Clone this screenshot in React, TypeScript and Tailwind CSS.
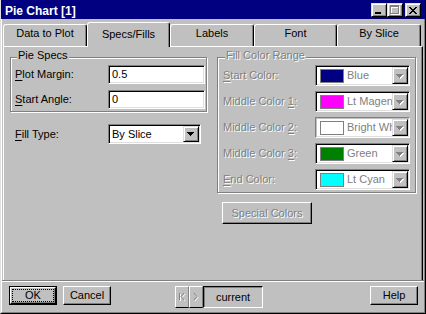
import React from "react";

const DIS = "text-[#808080] [text-shadow:1px_1px_0_#fff]";
const RAISED =
  "bg-[#c0c0c0] border border-t-white border-l-white border-r-black border-b-black shadow-[inset_-1px_-1px_0_#808080]";
const RAISED_SMALL =
  "bg-[#c0c0c0] border border-t-[#dfdfdf] border-l-[#dfdfdf] border-r-black border-b-black shadow-[inset_1px_1px_0_#fff,inset_-1px_-1px_0_#808080]";
const SUNKEN =
  "border border-t-[#808080] border-l-[#808080] border-r-white border-b-white shadow-[inset_1px_1px_0_#000,inset_-1px_-1px_0_#dfdfdf]";
const SUNKEN_SOFT =
  "border border-t-[#808080] border-l-[#808080] border-r-white border-b-white shadow-[inset_1px_1px_0_#c0c0c0,inset_-1px_-1px_0_#dfdfdf]";
const ETCHED = "border border-[#808080] shadow-[1px_1px_0_#fff,inset_1px_1px_0_#fff]";

function ArrowRows() {
  return (
    <>
      <rect x="0" y="0" width="7" height="1" />
      <rect x="1" y="1" width="5" height="1" />
      <rect x="2" y="2" width="3" height="1" />
      <rect x="3" y="3" width="1" height="1" />
    </>
  );
}

function DownArrow({ disabled }: { disabled?: boolean }) {
  return (
    <svg width="8" height="5" viewBox="0 0 8 5" shapeRendering="crispEdges">
      {disabled && (
        <g fill="#fff" transform="translate(1 1)">
          <ArrowRows />
        </g>
      )}
      <g fill={disabled ? "#808080" : "#000"}>
        <ArrowRows />
      </g>
    </svg>
  );
}

function DropBtn({ disabled }: { disabled?: boolean }) {
  return (
    <div className={`flex h-full w-[16px] shrink-0 items-center justify-center pt-[1px] ${RAISED_SMALL}`}>
      <DownArrow disabled={disabled} />
    </div>
  );
}

function ColorCombo({ swatch, label, soft }: { swatch: string; label: string; soft?: boolean }) {
  return (
    <div className={`flex h-[21px] w-[95px] bg-white p-[1px] ${soft ? SUNKEN_SOFT : SUNKEN}`}>
      <div className="flex min-w-0 flex-1 items-center overflow-hidden">
        <div className={`ml-[3px] h-[14px] w-[24px] shrink-0 border border-[#808080] ${swatch}`} />
        <span className="ml-[3px] whitespace-nowrap text-[#808080]">{label}</span>
      </div>
      <DropBtn disabled />
    </div>
  );
}

function U({ children }: { children: React.ReactNode }) {
  return <span className="underline underline-offset-[2px]">{children}</span>;
}

function Tab({ label, selected, w }: { label: string; selected?: boolean; w: string }) {
  if (selected) {
    return (
      <div
        className={`relative z-10 mb-[-1px] flex h-[25px] ${w} items-start justify-center rounded-tl-[3px] rounded-tr-[3px] border-l border-r border-t border-l-white border-r-black border-t-white bg-[#c0c0c0] pt-[5px] shadow-[inset_-1px_0_0_#808080]`}
      >
        {label}
      </div>
    );
  }
  return (
    <div
      className={`flex h-[22px] ${w} items-start justify-center rounded-tl-[3px] rounded-tr-[3px] border-l border-r border-t border-l-white border-r-black border-t-white pt-[2px] shadow-[inset_-1px_0_0_#808080]`}
    >
      {label}
    </div>
  );
}

function TitleBtn({ children }: { children: React.ReactNode }) {
  return (
    <div className={`flex h-[14px] w-[16px] items-center justify-center ${RAISED_SMALL}`}>{children}</div>
  );
}

export default function App() {
  const colorRows = [
    { label: <><U>S</U>tart Color:</>, swatch: "bg-[#000080]", text: "Blue" },
    { label: <>Middle Color <U>1</U>:</>, swatch: "bg-[#ff00ff]", text: "Lt Magenta" },
    { label: <>Middle Color <U>2</U>:</>, swatch: "bg-white", text: "Bright White", soft: true },
    { label: <>Middle Color <U>3</U>:</>, swatch: "bg-[#008000]", text: "Green" },
    { label: <><U>E</U>nd Color:</>, swatch: "bg-[#00ffff]", text: "Lt Cyan" },
  ];

  return (
    <div className="flex h-[314px] w-[426px] flex-col overflow-hidden border-b border-l border-r border-b-black border-l-[#dfdfdf] border-r-black bg-[#c0c0c0] text-[11px] leading-[13px] text-black [font-family:'Liberation_Sans',Arial,sans-serif]">
      {/* Title bar */}
      <div className="flex h-[19px] shrink-0 items-start bg-[#000080] pl-[4px] pr-[4px]">
        <span className="pt-[4px] text-[12px] font-bold leading-[14px] text-white">Pie Chart [1]</span>
        <div className="ml-auto mt-[3px] flex">
          <TitleBtn>
            <svg width="8" height="7" viewBox="0 0 8 7" shapeRendering="crispEdges">
              <rect x="0" y="5" width="6" height="2" fill="#000" />
            </svg>
          </TitleBtn>
          <TitleBtn>
            <svg width="10" height="10" viewBox="0 0 10 10" shapeRendering="crispEdges">
              <g fill="none" stroke="#fff" transform="translate(1 1)">
                <rect x="0.5" y="0.5" width="8" height="8" />
                <line x1="0" y1="1.5" x2="9" y2="1.5" />
              </g>
              <g fill="none" stroke="#808080">
                <rect x="0.5" y="0.5" width="8" height="8" />
                <line x1="0" y1="1.5" x2="9" y2="1.5" />
              </g>
            </svg>
          </TitleBtn>
          <div className="ml-[2px]">
            <TitleBtn>
              <svg width="8" height="7" viewBox="0 0 8 7" shapeRendering="crispEdges" fill="#000">
                <rect x="0" y="0" width="2" height="1" />
                <rect x="6" y="0" width="2" height="1" />
                <rect x="1" y="1" width="2" height="1" />
                <rect x="5" y="1" width="2" height="1" />
                <rect x="2" y="2" width="4" height="1" />
                <rect x="3" y="3" width="2" height="1" />
                <rect x="2" y="4" width="4" height="1" />
                <rect x="1" y="5" width="2" height="1" />
                <rect x="5" y="5" width="2" height="1" />
                <rect x="0" y="6" width="2" height="1" />
                <rect x="6" y="6" width="2" height="1" />
              </svg>
            </TitleBtn>
          </div>
        </div>
      </div>

      {/* Window body */}
      <div className="flex flex-1 flex-col border-b border-l border-r border-b-[#808080] border-l-white border-r-[#808080]">
        {/* Tabs */}
        <div className="mt-[3px] flex h-[24px] shrink-0 items-end pl-[1px]">
          <Tab label="Data to Plot" w="w-[84px]" />
          <Tab label="Specs/Fills" w="w-[83px]" selected />
          <Tab label="Labels" w="w-[84px]" />
          <Tab label="Font" w="w-[83px]" />
          <Tab label="By Slice" w="w-[84px]" />
        </div>

        {/* Tab panel */}
        <div className="mx-[1px] flex h-[234px] shrink-0 gap-[10px] border-l border-r border-t border-l-white border-r-black border-t-white pl-[6px] pt-[10px] shadow-[inset_-1px_0_0_#808080]">
          {/* Left column */}
          <div className="flex w-[197px] flex-col">
            <div className={`relative flex flex-col gap-[6px] pb-[2px] pl-[4px] pr-[1px] pt-[7px] ${ETCHED}`}>
              <span className="absolute left-[6px] top-[-9px] bg-[#c0c0c0] px-[1px]">Pie Specs</span>
              <div className="flex h-[19px] items-center">
                <span className="w-[93px]">
                  <U>P</U>lot Margin:
                </span>
                <div className={`flex h-[19px] flex-1 items-center bg-white pl-[3px] ${SUNKEN}`}>0.5</div>
              </div>
              <div className="flex h-[19px] items-center">
                <span className="w-[93px]">
                  <U>S</U>tart Angle:
                </span>
                <div className={`flex h-[19px] flex-1 items-center bg-white pl-[3px] ${SUNKEN}`}>0</div>
              </div>
            </div>
            <div className="mt-[12px] flex h-[20px] items-center pl-[5px]">
              <span className="w-[93px]">
                <U>F</U>ill Type:
              </span>
              <div className={`flex h-[20px] w-[93px] bg-white p-[1px] ${SUNKEN}`}>
                <span className="flex flex-1 items-center pl-[2px]">By Slice</span>
                <DropBtn />
              </div>
            </div>
          </div>

          {/* Right column */}
          <div className="flex w-[199px] flex-col">
            <div className={`relative flex flex-col gap-[5px] pb-[2px] pl-[5px] pt-[7px] ${ETCHED}`}>
              <span className={`absolute left-[7px] top-[-9px] bg-[#c0c0c0] px-[1px] ${DIS}`}>Fill Color Range</span>
              {colorRows.map((r, i) => (
                <div key={i} className="flex h-[21px] items-center">
                  <span className={`w-[92px] whitespace-nowrap ${DIS}`}>{r.label}</span>
                  <ColorCombo swatch={r.swatch} label={r.text} soft={r.soft} />
                </div>
              ))}
            </div>
            <div
              className={`ml-[5px] mt-[9px] flex h-[22px] w-[90px] items-center justify-center ${RAISED} ${DIS}`}
            >
              Special Colors
            </div>
          </div>
        </div>

        {/* Etched separator */}
        <div className="h-[2px] shrink-0 border-b border-t border-b-white border-t-[#808080]" />

        {/* Bottom buttons */}
        <div className="flex flex-1 items-start pl-[7px] pr-[6px] pt-[4px]">
          <div className="flex h-[19px] w-[48px] border border-black">
            <div className={`flex flex-1 ${RAISED}`}>
              <div className="m-[1px] flex flex-1 items-center justify-center border border-dotted border-black">
                OK
              </div>
            </div>
          </div>
          <div className={`ml-[6px] flex h-[19px] w-[48px] items-center justify-center ${RAISED}`}>Cancel</div>

          <div className="ml-[64px] flex h-[22px]">
            <div className="flex h-full w-[14px] items-center justify-center border-b border-l border-r border-t border-b-black border-l-white border-r-[#808080] border-t-white">
              <svg width="8" height="9" viewBox="0 0 8 9" shapeRendering="crispEdges">
                <g fill="none" stroke="#fff" transform="translate(1 1)">
                  <line x1="1.5" y1="0" x2="1.5" y2="7" />
                  <polyline points="6,0 3,3.5 6,7" shapeRendering="auto" />
                </g>
                <g fill="none" stroke="#808080">
                  <line x1="1.5" y1="0" x2="1.5" y2="7" />
                  <polyline points="6,0 3,3.5 6,7" shapeRendering="auto" />
                </g>
              </svg>
            </div>
            <div className="flex h-full w-[14px] items-center justify-center border-b border-l border-r border-t border-b-black border-l-white border-r-[#808080] border-t-white">
              <svg width="6" height="9" viewBox="0 0 6 9">
                <polyline points="2,1 5,4.5 2,8" fill="none" stroke="#fff" />
                <polyline points="1,0 4,3.5 1,7" fill="none" stroke="#808080" />
              </svg>
            </div>
            <div className="flex h-full w-[60px] items-center justify-center border border-b-white border-l-black border-r-white border-t-black shadow-[inset_1px_1px_0_#808080]">
              current
            </div>
          </div>

          <div className={`ml-auto flex h-[19px] w-[48px] items-center justify-center ${RAISED}`}>Help</div>
        </div>
      </div>
    </div>
  );
}
